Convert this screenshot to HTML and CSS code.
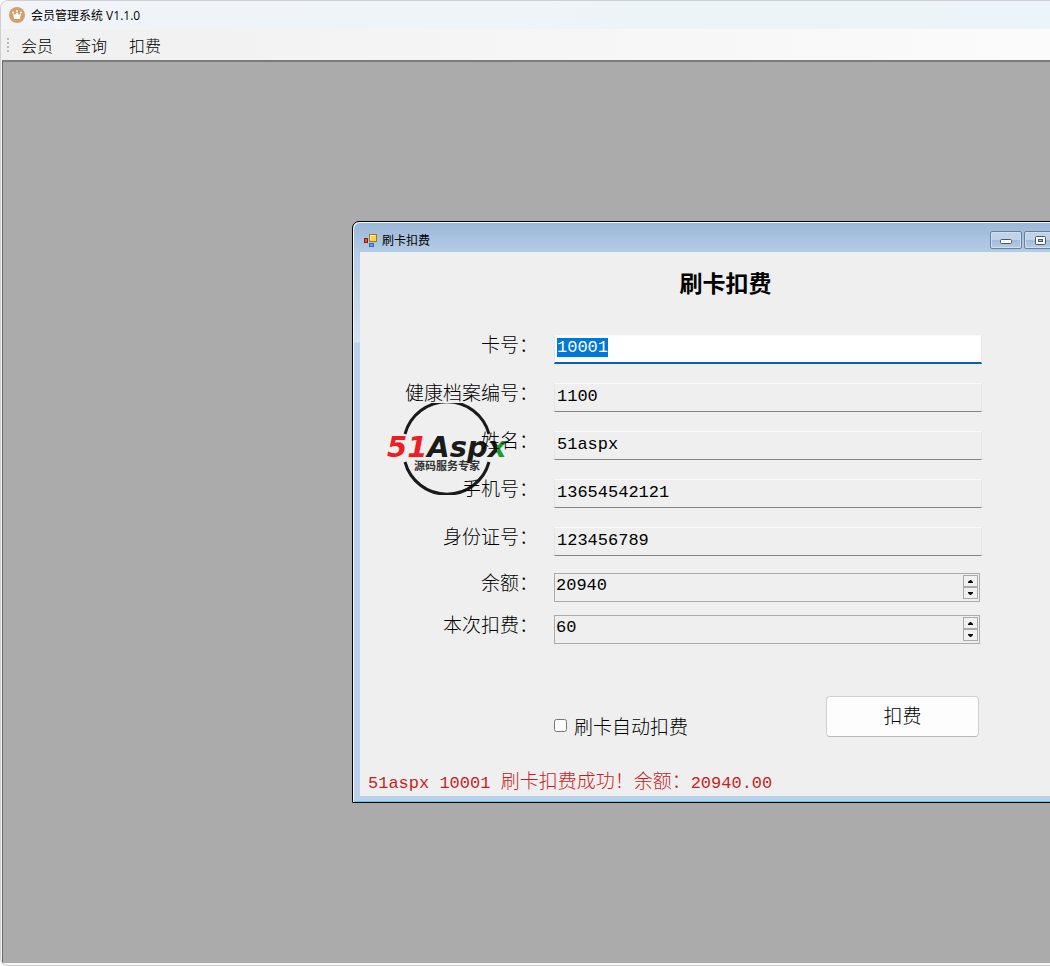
FILE: index.html
```
<!DOCTYPE html>
<html lang="zh-CN">
<head>
    <meta charset="UTF-8">
    <meta name="viewport" content="width=device-width, initial-scale=1.0">
    <title>会员管理系统 V1.1.0</title>
    <link rel="stylesheet" href="styles.css">
</head>
<body>

    <div class="app">
        <header class="app-title">
            <svg class="app-icon" viewBox="0 0 16 16">
                <circle cx="8" cy="8" r="8" fill="#d3a069"/>
                <path d="M4 6l2 2 2-3 2 3 2-2-1 6H5z" fill="#fff"/>
                <circle cx="4" cy="5.500" r="1" fill="#fff"/>
                <circle cx="8" cy="4" r="1" fill="#fff"/>
                <circle cx="12" cy="5.500" r="1" fill="#fff"/>
            </svg>
            <span>会员管理系统 V1.1.0</span>
        </header>

        <nav class="menu">
            <span class="grip"></span>
            <a href="#">会员</a>
            <a href="#">查询</a>
            <a href="#">扣费</a>
        </nav>

        <main class="desktop">
            <section class="window">
                <div class="window-title">
                    <svg class="window-icon" viewBox="0 0 13 13">
                        <rect x="5.500" y=".5" width="7" height="7" fill="#fbd04a" stroke="#a17a16"/>
                        <path d="M6.500 6V1.500H11" fill="none" stroke="#fff0a8"/>
                        <rect x=".5" y="4.500" width="3" height="4" fill="#e2553f" stroke="#96190f"/>
                        <rect x="5.500" y="9.500" width="4" height="3" fill="#6d9df0" stroke="#3563c4"/>
                    </svg>
                    <span class="window-name">刷卡扣费</span>
                    <button class="win-btn" aria-label="最小化">
                        <svg width="12" height="8" viewBox="0 0 12 8"><rect x=".5" y="3.500" width="11" height="4" rx="1" fill="#fff" stroke="#4c5560"/></svg>
                    </button>
                    <button class="win-btn" aria-label="最大化">
                        <svg width="11" height="9" viewBox="0 0 11 9"><rect x=".5" y=".5" width="10" height="8" rx="1" fill="#fff" stroke="#4c5560"/><rect x="3.500" y="3.500" width="4" height="2" fill="#9db8d6" stroke="#4c5560"/></svg>
                    </button>
                    <button class="win-btn" aria-label="关闭">
                        <svg width="10" height="8" viewBox="0 0 10 8"><path d="M1 0l8 8M9 0L1 8" stroke="#4c5560" stroke-width="2"/></svg>
                    </button>
                </div>

                <form class="window-body" onsubmit="return false">
                    <svg class="logo" viewBox="0 0 126 92">
                        <path d="M18 31A43.500 43.500 0 0 1 102 31M18 59A43.500 43.500 0 0 0 102 59" fill="none" stroke="#1a1a1a" stroke-width="3"/>
                        <defs>
                            <linearGradient id="xFill" gradientUnits="userSpaceOnUse" x1="100" y1="0" x2="120" y2="0">
                                <stop offset="0.500" stop-color="#1a1a1a"/>
                                <stop offset="0.500" stop-color="#1f9a2c"/>
                            </linearGradient>
                        </defs>
                        <text class="logo-name" x="0" y="54"><tspan fill="#ee1c25">51</tspan>Asp<tspan fill="url(#xFill)">x</tspan></text>
                        <text class="logo-sub" x="27" y="67">源码服务专家</text>
                    </svg>

                    <h1>刷卡扣费</h1>

                    <div class="row">
                        <label for="cardNo">卡号：</label>
                        <input type="text" class="field active" id="cardNo" value="10001" autofocus>
                    </div>
                    <div class="row">
                        <label for="fileNo">健康档案编号：</label>
                        <input type="text" class="field" id="fileNo" value="1100" readonly>
                    </div>
                    <div class="row">
                        <label for="userName">姓名：</label>
                        <input type="text" class="field" id="userName" value="51aspx" readonly>
                    </div>
                    <div class="row">
                        <label for="phone">手机号：</label>
                        <input type="text" class="field" id="phone" value="13654542121" readonly>
                    </div>
                    <div class="row last-text">
                        <label for="idCard">身份证号：</label>
                        <input type="text" class="field" id="idCard" value="123456789" readonly>
                    </div>
                    <div class="row number-row">
                        <label for="balance">余额：</label>
                        <div class="spin">
                            <input type="number" id="balance" value="20940" readonly>
                            <div class="spin-btns">
                                <button type="button" aria-label="增加" onclick="step('balance', 1)"><svg viewBox="0 0 5 3"><path d="M0 3V2l2-2h1l2 2v1z"/></svg></button>
                                <button type="button" aria-label="减少" onclick="step('balance', -1)"><svg viewBox="0 0 5 3"><path d="M0 0v1l2 2h1l2-2V0z"/></svg></button>
                            </div>
                        </div>
                    </div>
                    <div class="row number-row">
                        <label for="amount">本次扣费：</label>
                        <div class="spin">
                            <input type="number" id="amount" value="60">
                            <div class="spin-btns">
                                <button type="button" aria-label="增加" onclick="step('amount', 1)"><svg viewBox="0 0 5 3"><path d="M0 3V2l2-2h1l2 2v1z"/></svg></button>
                                <button type="button" aria-label="减少" onclick="step('amount', -1)"><svg viewBox="0 0 5 3"><path d="M0 0v1l2 2h1l2-2V0z"/></svg></button>
                            </div>
                        </div>
                    </div>

                    <div class="actions">
                        <label class="check"><input type="checkbox" id="autoPay">刷卡自动扣费</label>
                        <button type="submit" class="pay-btn">扣费</button>
                    </div>

                    <p class="status"><span class="mono">51aspx 10001 </span>刷卡扣费成功！余额：<span class="mono">20940.00</span></p>
                </form>
            </section>
        </main>
    </div>

    <script>
        // 选中卡号，方便直接刷下一张卡
        const cardNo = document.getElementById('cardNo');
        cardNo.focus();
        cardNo.select();

        function step(id, delta) {
            const input = document.getElementById(id);
            if (input.readOnly) return;
            input.value = Number(input.value) + delta;
        }
    </script>

</body>
</html>
```
FILE: styles.css
```
* {
    box-sizing: border-box;
}

body {
    margin: 0;
    background: #fff;
    color: #000;
    font-family: "Open Sans", "Noto Sans CJK SC", sans-serif;
    overflow: hidden;
}

/* 主窗口 */
.app {
    display: flex;
    flex-direction: column;
    height: 100vh;
    border: 1px solid #d0d0d0;
    border-right: none;
    border-radius: 8px 0 0 8px;
    background: #f5f5f5;
    overflow: hidden;
}

.app-title {
    display: flex;
    align-items: center;
    gap: 6px;
    height: 28px;
    padding-left: 8px;
    background: linear-gradient(90deg, #f1f4f9, #ebf4f8);
    font-size: 12px;
}

.app-icon {
    width: 16px;
    height: 16px;
}

.menu {
    display: flex;
    align-items: center;
    height: 31px;
    padding-left: 6px;
    background: linear-gradient(90deg, #f0f0f0, #fbfbfb);
    font-family: "Noto Sans CJK SC", sans-serif;
    font-size: 16px;
    font-weight: 300;
}

.menu a {
    margin-right: 22px;
    color: #000;
    text-decoration: none;
}

.grip {
    width: 2px;
    height: 14px;
    margin-right: 12px;
    background: repeating-linear-gradient(#b8b8b8 0 2px, transparent 2px 4px);
}

.desktop {
    flex: 1;
    position: relative;
    margin: 0 0 2px 1px;
    border-left: 1px solid #696969;
    border-top: 2px solid #7c7c7c;
    background: #ababab;
    overflow: hidden;
}

/* 子窗口 */
.window {
    position: absolute;
    left: 349px;
    top: 159px;
    width: 746px;
    padding: 0 6px 6px 7px;
    border: 1px solid #000;
    border-radius: 7px 7px 0 0;
    background: linear-gradient(#9bb7d7, #b3cce6 30px, #d5e3f3 120px, #b9d1ea 121px);
    box-shadow: inset 1px 1px #f4f8fc, inset 0 -1px #55cfea;
}

.window-title {
    display: flex;
    align-items: center;
    gap: 2px;
    height: 30px;
    padding: 6px 1px 0 4px;
    font-size: 12px;
}

.window-icon {
    width: 13px;
    height: 13px;
    margin-right: 3px;
}

.window-name {
    flex: 1;
}

.win-btn {
    display: flex;
    align-items: center;
    justify-content: center;
    width: 32px;
    height: 18px;
    padding: 0;
    border: 1px solid #66809f;
    border-radius: 2px;
    background: linear-gradient(#c0d3e9 50%, #a0bcdb 50%, #b4cce5);
    box-shadow: inset 0 0 0 1px #d0dff0;
}

.window-body {
    position: relative;
    padding: 15px 0 0;
    background: #efefef;
    font-family: "Noto Sans CJK SC", sans-serif;
    font-size: 19px;
    font-weight: 300;
}

.window-body h1 {
    margin: 0 0 38px;
    text-align: center;
    font-size: 23px;
    font-weight: 700;
    line-height: 30px;
}

.row {
    display: grid;
    grid-template-columns: 178px 428px;
    column-gap: 16px;
    height: 30px;
    margin-bottom: 18px;
}

.row label {
    position: relative;
    text-align: right;
    line-height: 18px;
    white-space: nowrap;
}

.field,
.spin input,
.mono {
    font-family: "Liberation Mono", monospace;
    font-size: 17px;
    font-weight: 400;
}

.field {
    height: 29px;
    padding: 0 2px 3px;
    border: 1px solid #e6e6e6;
    border-top-color: #fafafa;
    border-bottom-color: #858585;
    background: #efefef;
    color: #000;
    outline: none;
}

.field.active {
    border-bottom: 2px solid #0a5fb0;
    background: #fff;
}

.field::selection {
    background: #0078d7;
    color: #fff;
}

.last-text {
    margin-bottom: 16px;
}

.number-row {
    height: 29px;
    margin-bottom: 13px;
}

/* 数字输入框 */
.spin {
    display: flex;
    width: 426px;
    height: 29px;
    padding: 1px;
    border: 1px solid #ababab;
}

.spin input {
    flex: 1;
    min-width: 0;
    padding: 0 0 4px;
    border: none;
    background: none;
    outline: none;
    -moz-appearance: textfield;
    appearance: textfield;
}

.spin input::-webkit-inner-spin-button {
    display: none;
}

.spin-btns {
    display: flex;
    flex-direction: column;
    width: 15px;
}

.spin-btns button {
    display: flex;
    align-items: center;
    justify-content: center;
    height: 12px;
    padding: 0;
    border: 1px solid #ababab;
    background: #f0f0f0;
}

.spin-btns svg {
    width: 5px;
    height: 3px;
}

.actions {
    display: flex;
    justify-content: space-between;
    width: 619px;
    padding: 39px 0 0 194px;
}

.check {
    display: flex;
    align-items: center;
    gap: 7px;
    height: 58px;
}

.check input {
    width: 13px;
    height: 13px;
    margin: 0;
}

.pay-btn {
    width: 153px;
    height: 41px;
    padding: 0 0 4px;
    border: 1px solid #d0d0d0;
    border-bottom-color: #bababa;
    border-radius: 4px;
    background: #fdfdfd;
    color: #000;
    font: inherit;
}

.status {
    margin: 14px 0 0 8px;
    color: #c81e1e;
    line-height: 24px;
    white-space: pre;
}

.logo {
    position: absolute;
    left: 27px;
    top: 151px;
    width: 126px;
    height: 92px;
}

.logo-name {
    fill: #1a1a1a;
    font: italic 700 29px "DejaVu Sans", sans-serif;
}

.logo-sub {
    fill: #333;
    font: 700 11px "Noto Sans CJK SC", sans-serif;
}
```
